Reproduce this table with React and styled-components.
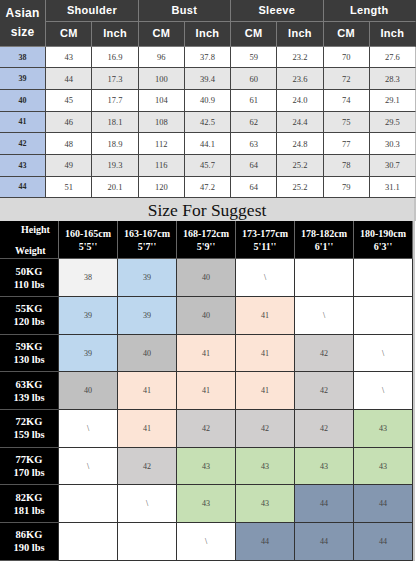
import React from "react";
import styled, { createGlobalStyle } from "styled-components";

const GlobalStyle = createGlobalStyle`
  html, body { margin: 0; padding: 0; background: #ffffff; }
  * { box-sizing: border-box; }
`;

const sizeRows = [
  ["38", "43", "16.9", "96", "37.8", "59", "23.2", "70", "27.6"],
  ["39", "44", "17.3", "100", "39.4", "60", "23.6", "72", "28.3"],
  ["40", "45", "17.7", "104", "40.9", "61", "24.0", "74", "29.1"],
  ["41", "46", "18.1", "108", "42.5", "62", "24.4", "75", "29.5"],
  ["42", "48", "18.9", "112", "44.1", "63", "24.8", "77", "30.3"],
  ["43", "49", "19.3", "116", "45.7", "64", "25.2", "78", "30.7"],
  ["44", "51", "20.1", "120", "47.2", "64", "25.2", "79", "31.1"],
];

const heights = [
  ["160-165cm", "5'5''"],
  ["163-167cm", "5'7''"],
  ["168-172cm", "5'9''"],
  ["173-177cm", "5'11''"],
  ["178-182cm", "6'1''"],
  ["180-190cm", "6'3''"],
];

const tones = {
  w: "#ffffff",
  l: "#f2f2f2",
  b: "#bdd7ee",
  g: "#c0c0c0",
  p: "#fce4d6",
  s: "#d0cece",
  n: "#c6e0b4",
  d: "#8497b0",
};

const suggest = [
  ["50KG", "110 lbs", [["38", "l"], ["39", "b"], ["40", "g"], ["\\", "w"], ["", "w"], ["", "w"]]],
  ["55KG", "120 lbs", [["39", "b"], ["39", "b"], ["40", "g"], ["41", "p"], ["\\", "w"], ["", "w"]]],
  ["59KG", "130 lbs", [["39", "b"], ["40", "g"], ["41", "p"], ["41", "p"], ["42", "s"], ["\\", "w"]]],
  ["63KG", "139 lbs", [["40", "g"], ["41", "p"], ["41", "p"], ["41", "p"], ["42", "s"], ["\\", "w"]]],
  ["72KG", "159 lbs", [["\\", "w"], ["41", "p"], ["42", "s"], ["42", "s"], ["42", "s"], ["43", "n"]]],
  ["77KG", "170 lbs", [["\\", "w"], ["42", "s"], ["43", "n"], ["43", "n"], ["43", "n"], ["43", "n"]]],
  ["82KG", "181 lbs", [["", "w"], ["\\", "w"], ["43", "n"], ["43", "n"], ["44", "d"], ["44", "d"]]],
  ["86KG", "190 lbs", [["", "w"], ["", "w"], ["\\", "w"], ["44", "d"], ["44", "d"], ["44", "d"]]],
];

export default function App() {
  return (
    <Page>
      <GlobalStyle />
      <MeasureGrid>
        <HeadCell $span={2} $big>
          Asian
          <br />
          size
        </HeadCell>
        <HeadCell $cols={2}>Shoulder</HeadCell>
        <HeadCell $cols={2}>Bust</HeadCell>
        <HeadCell $cols={2}>Sleeve</HeadCell>
        <HeadCell $cols={2} $last>Length</HeadCell>
        {["CM", "Inch", "CM", "Inch", "CM", "Inch", "CM", "Inch"].map((t, i) => (
          <HeadCell key={i} $last={i === 7}>
            {t}
          </HeadCell>
        ))}
        {sizeRows.map((row, r) =>
          row.map((v, c) =>
            c === 0 ? (
              <SizeCell key={`${r}-${c}`}>{v}</SizeCell>
            ) : (
              <DataCell key={`${r}-${c}`} $shade={r % 2 === 1} $last={c === 8}>
                {v}
              </DataCell>
            )
          )
        )}
      </MeasureGrid>
      <Title>Size For Suggest</Title>
      <SuggestGrid>
        <CornerCell>
          <span>Height</span>
          <span>Weight</span>
        </CornerCell>
        {heights.map(([cm, ft]) => (
          <TopCell key={cm}>
            <span>{cm}</span>
            <span>{ft}</span>
          </TopCell>
        ))}
        {suggest.map(([kg, lbs, cells]) => (
          <React.Fragment key={kg}>
            <SideCell>
              <span>{kg}</span>
              <span>{lbs}</span>
            </SideCell>
            {cells.map(([v, t], i) => (
              <FitCell key={i} $bg={tones[t]}>
                {v}
              </FitCell>
            ))}
          </React.Fragment>
        ))}
      </SuggestGrid>
    </Page>
  );
}

const Page = styled.div`
  width: 416px;
  height: 569px;
  background: #ffffff;
  overflow: hidden;
`;

const MeasureGrid = styled.div`
  display: grid;
  grid-template-columns: repeat(9, 1fr);
  grid-template-rows: 22px 24.7px repeat(7, 21.66px);
  width: 416px;
  background: #ffffff;
`;

const HeadCell = styled.div`
  grid-column: span ${(p) => p.$cols || 1};
  grid-row: span ${(p) => p.$span || 1};
  display: flex;
  align-items: center;
  justify-content: center;
  text-align: center;
  background: #3b3b3b;
  color: #ffffff;
  font-family: "Liberation Sans", Arial, sans-serif;
  font-weight: bold;
  font-size: ${(p) => (p.$big ? "12px" : "11px")};
  line-height: ${(p) => (p.$big ? "19px" : "1")};
  letter-spacing: 0.3px;
  border-right: 1.5px solid ${(p) => (p.$last ? "#3b3b3b" : "#7a7a7a")};
  border-bottom: 1.5px solid #7a7a7a;
`;

const SizeCell = styled.div`
  display: flex;
  align-items: center;
  justify-content: center;
  background: #b4c6e7;
  color: #2a2a2a;
  font-family: "Liberation Serif", "Times New Roman", serif;
  font-weight: bold;
  font-size: 8px;
  border-right: 1.5px solid #444;
  border-bottom: 1.5px solid #444;
`;

const DataCell = styled.div`
  display: flex;
  align-items: center;
  justify-content: center;
  background: ${(p) => (p.$shade ? "#e6e6e6" : "#ffffff")};
  color: #3c3c3c;
  font-family: "Liberation Serif", "Times New Roman", serif;
  font-size: 8.5px;
  border-right: 1.5px solid ${(p) => (p.$last ? "#bbb" : "#444")};
  border-bottom: 1.5px solid #444;
`;

const Title = styled.div`
  height: 23px;
  width: 416px;
  display: flex;
  align-items: center;
  justify-content: center;
  background: #d9d9d9;
  border-right: 2px solid #c4c4c4;
  color: #111;
  font-family: "Liberation Serif", "Times New Roman", serif;
  font-size: 17.5px;
  line-height: 1;
  padding-top: 2px;
`;

const SuggestGrid = styled.div`
  display: grid;
  grid-template-columns: repeat(7, 59px);
  grid-template-rows: 38px repeat(8, 37.7px);
  width: 415px;
  border-right: 2px solid #c9c9c9;
`;

const serifBold = `
  font-family: "Liberation Serif", "Times New Roman", serif;
  font-weight: bold;
  color: #ffffff;
`;

const CornerCell = styled.div`
  ${serifBold}
  background: #000000;
  font-size: 10px;
  line-height: 11px;
  display: flex;
  flex-direction: column;
  justify-content: space-between;
  padding: 3px 0 2px 0;
  border-right: 1px solid #666;
  border-bottom: 1px solid #555;
  span:first-child { padding-left: 21px; }
  span:last-child { padding-left: 15px; }
`;

const TopCell = styled.div`
  ${serifBold}
  background: #000000;
  font-size: 10px;
  line-height: 13px;
  display: flex;
  flex-direction: column;
  align-items: center;
  justify-content: center;
  padding-top: 1px;
  border-right: 1px solid #666;
  border-bottom: 1px solid #555;
`;

const SideCell = styled.div`
  ${serifBold}
  background: #000000;
  font-size: 10.5px;
  line-height: 13px;
  display: flex;
  flex-direction: column;
  align-items: center;
  justify-content: center;
  border-bottom: 1px solid #555;
  border-right: 1px solid #333;
`;

const FitCell = styled.div`
  display: flex;
  align-items: center;
  justify-content: center;
  background: ${(p) => p.$bg};
  color: #444;
  font-family: "Liberation Serif", "Times New Roman", serif;
  font-size: 8px;
  border-right: 1px solid #333;
  border-bottom: 1px solid #333;
`;
